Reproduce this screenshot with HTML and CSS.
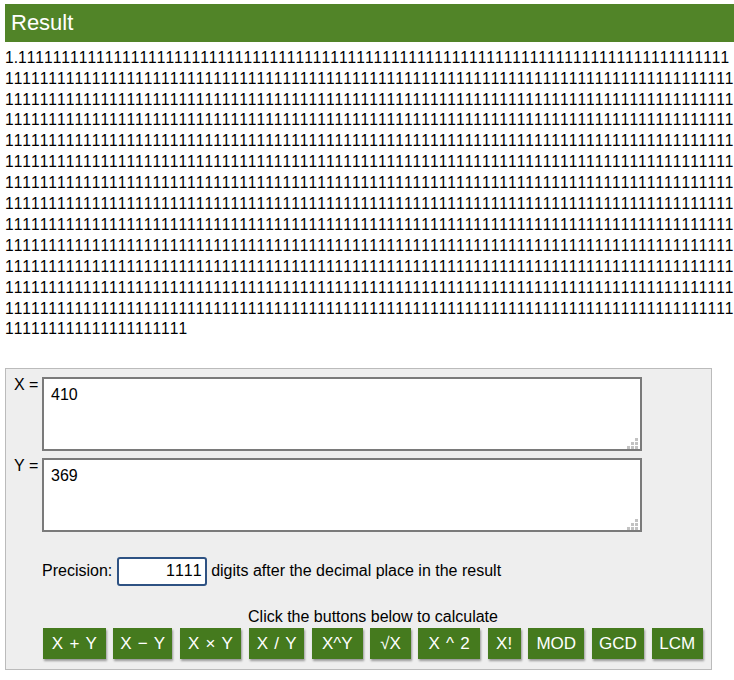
FILE: index.html
```html
<!DOCTYPE html>
<html lang="en">
<head>
<meta charset="utf-8">
<title>Big Number Calculator</title>
<link rel="stylesheet" href="styles.css">
<script src="script.js" defer></script>
</head>
<body>
<div class="page">
  <h2 class="result-head">Result</h2>
  <div class="result-num" id="result" data-int="1" data-digits="1111" data-digit="1">1.1111111111</div>

  <div class="panel">
    <div class="row row-x">
      <span class="lbl">X =</span>
      <div class="ta-wrap">
        <textarea class="ta">410</textarea>
        <svg class="grip" width="11" height="11" viewBox="0 0 11 11"><rect x="8" y="0" width="3" height="3"/><rect x="4" y="4" width="3" height="3"/><rect x="8" y="4" width="3" height="3"/><rect x="0" y="8" width="3" height="3"/><rect x="4" y="8" width="3" height="3"/><rect x="8" y="8" width="3" height="3"/></svg>
      </div>
    </div>
    <div class="row row-y">
      <span class="lbl">Y =</span>
      <div class="ta-wrap">
        <textarea class="ta">369</textarea>
        <svg class="grip" width="11" height="11" viewBox="0 0 11 11"><rect x="8" y="0" width="3" height="3"/><rect x="4" y="4" width="3" height="3"/><rect x="8" y="4" width="3" height="3"/><rect x="0" y="8" width="3" height="3"/><rect x="4" y="8" width="3" height="3"/><rect x="8" y="8" width="3" height="3"/></svg>
      </div>
    </div>
    <div class="row row-prec">
      <span class="lbl"></span>
      <div class="prec">
        <span>Precision:</span>
        <input class="prec-in" type="text" value="1111">
        <span>digits after the decimal place in the result</span>
      </div>
    </div>
    <div class="row row-calc">
      <span class="lbl"></span>
      <div class="calc">
        <div class="calc-note">Click the buttons below to calculate</div>
        <div class="btns">
          <button type="button" class="btn w-add">X + Y</button>
          <button type="button" class="btn w-sub">X &minus; Y</button>
          <button type="button" class="btn w-mul">X &times; Y</button>
          <button type="button" class="btn w-div">X / Y</button>
          <button type="button" class="btn w-pow">X^Y</button>
          <button type="button" class="btn w-sqrt">&radic;X</button>
          <button type="button" class="btn w-sq">X ^ 2</button>
          <button type="button" class="btn w-fact">X!</button>
          <button type="button" class="btn w-mod">MOD</button>
          <button type="button" class="btn w-gcd">GCD</button>
          <button type="button" class="btn w-lcm">LCM</button>
        </div>
      </div>
    </div>
  </div>
</div>
</body>
</html>
```

FILE: script.js
```js
// 410 / 369 = 10 / 9 = 1.111... shown with the requested number of decimal digits
document.addEventListener('DOMContentLoaded', function () {
  var el = document.getElementById('result');
  var digits = parseInt(el.getAttribute('data-digits'), 10);
  el.textContent = el.getAttribute('data-int') + '.' + el.getAttribute('data-digit').repeat(digits);
});
```

FILE: styles.css
```css
* { box-sizing: border-box; }
html { overflow: hidden; }
body {
  margin: 0;
  font-family: "Liberation Sans", Arial, sans-serif;
  font-size: 16px;
  font-kerning: none;
  color: #000;
  background: #fff;
}
.page { padding: 4px 0 0 5px; }

.result-head {
  margin: 0;
  height: 37.7px;
  line-height: 37.7px;
  padding-left: 6px;
  background: #518428;
  color: #fff;
  font-size: 22px;
  font-weight: normal;
}
.result-num {
  width: 730px;
  margin-top: 6px;
  font-size: 15.6px;
  line-height: 20.9px;
  font-kerning: none;
  word-break: break-all;
}

.panel {
  margin-top: 27.5px;
  width: 707px;
  background: #eee;
  border: 1px solid #bbb;
  padding: 7px 7px 10px 7px;
}
.row { display: flex; }
.lbl { flex: none; width: 29px; padding-left: 1px; }
.row-y { margin-top: 5.4px; }
.row-prec { margin-top: 24.4px; }
.row-calc { margin-top: 22px; }

.ta-wrap { position: relative; width: 600px; margin-top: 1.6px; }
.ta {
  display: block;
  width: 600px;
  height: 74px;
  margin: 0;
  padding: 7px;
  border: 2px solid #7a7a7a;
  background: #fff;
  font-family: "Liberation Sans", Arial, sans-serif;
  font-size: 16px;
  font-kerning: none;
  color: #000;
  resize: none;
  outline: none;
}
.grip { position: absolute; right: 4px; bottom: 2px; fill: #c2c2c2; }

.prec { display: flex; align-items: center; height: 29px; }
.prec-in {
  width: 89.4px;
  height: 29px;
  margin: 0 4.5px 0 5px;
  padding: 0 3px;
  border: 2px solid #2e5283;
  border-radius: 3px;
  background: #fff;
  font-family: "Liberation Sans", Arial, sans-serif;
  font-size: 16px;
  font-kerning: none;
  color: #000;
  text-align: right;
  outline: none;
}

.calc { width: 662px; text-align: center; }
.calc-note { line-height: 18.4px; }
.btns {
  display: flex;
  justify-content: center;
  gap: 7.7px;
  margin-top: 1.6px;
}
.btn {
  height: 31.6px;
  padding: 0;
  border: 0;
  background: #457a1e;
  color: #fff;
  font-family: "Liberation Sans", Arial, sans-serif;
  font-size: 17px;
  font-kerning: none;
  word-spacing: 1.5px;
  text-align: center;
  box-shadow: 1px 2px 2px #999;
  cursor: pointer;
}
.w-add { width: 62.7px; }
.w-sub { width: 58.6px; }
.w-mul { width: 61.5px; }
.w-div { width: 55.5px; }
.w-pow { width: 50.5px; }
.w-sqrt { width: 40.5px; }
.w-sq { width: 61.5px; }
.w-fact { width: 33px; }
.w-mod { width: 56px; }
.w-gcd { width: 52px; }
.w-lcm { width: 51.3px; }
```
